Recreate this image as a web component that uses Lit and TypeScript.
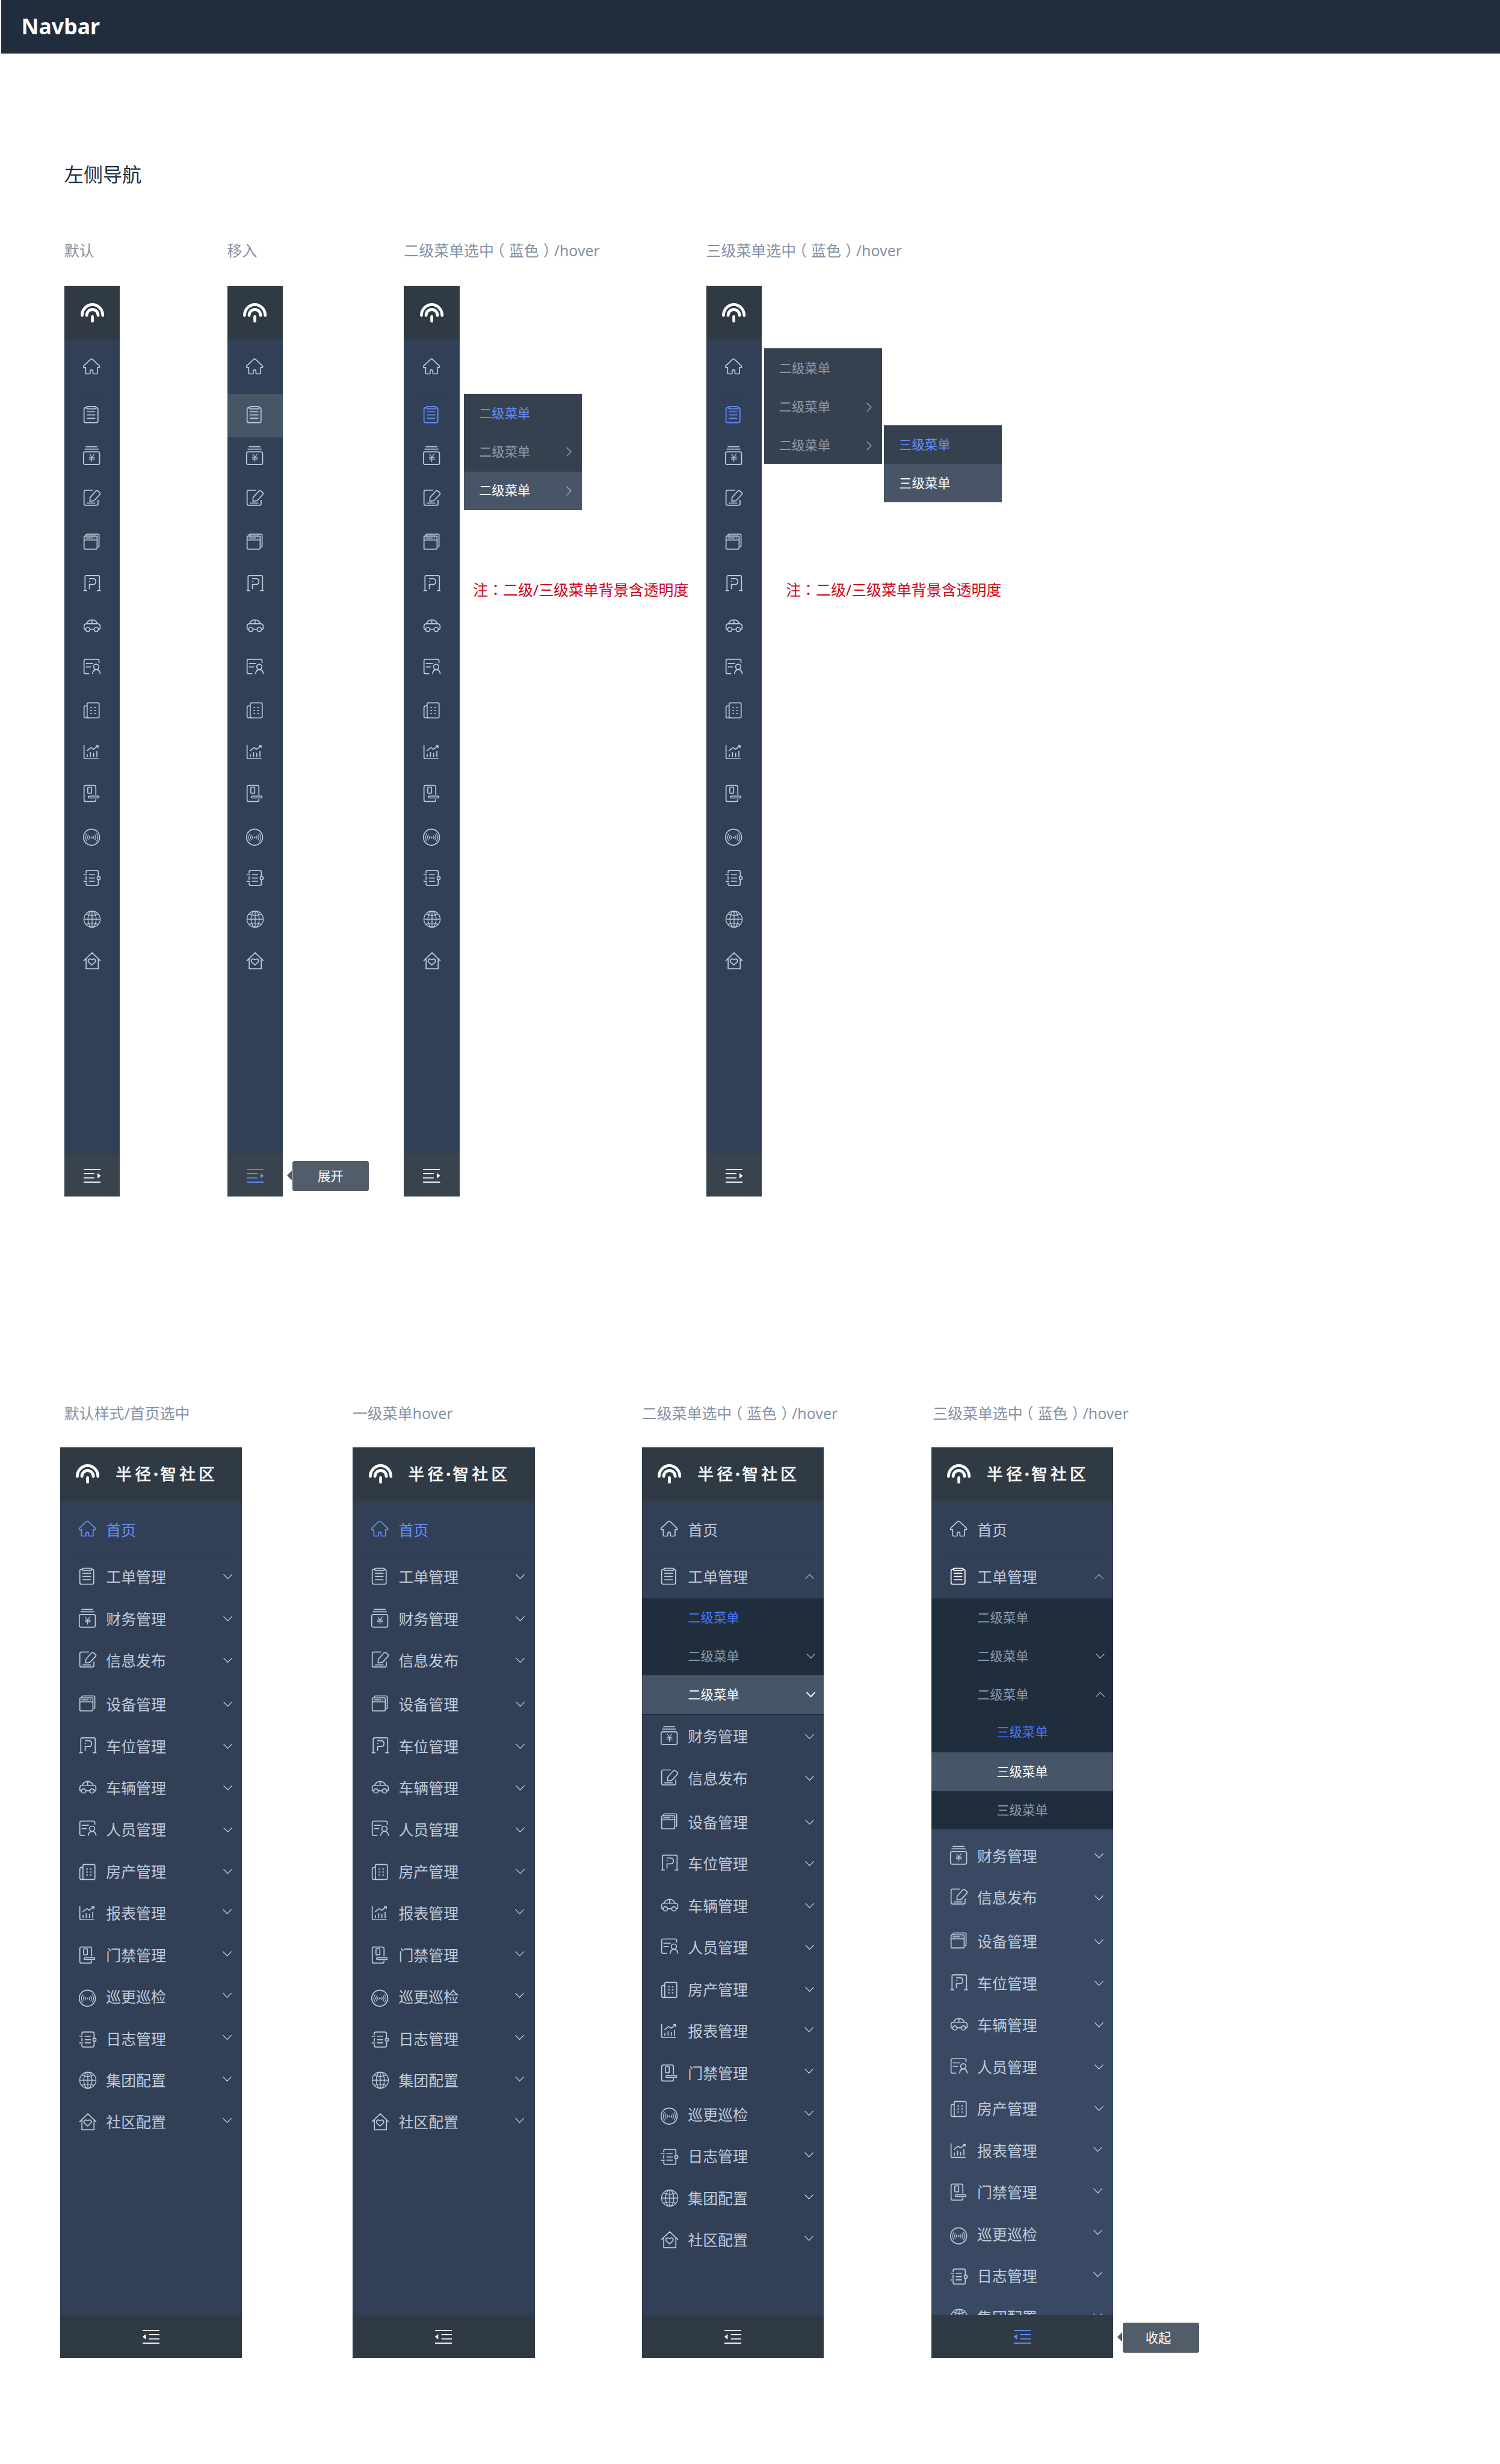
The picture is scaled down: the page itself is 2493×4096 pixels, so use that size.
import { LitElement, html, css, svg, nothing } from "lit";
import { customElement, property } from "lit/decorators.js";
import { classMap } from "lit/directives/class-map.js";

/* Outline icons, drawn on a 36 x 36 grid with the glyph centred on y = 18. */
const ICONS: Record<string, unknown> = {
  home: svg`<path d="M15.5 4.6Q17 3.4 18.5 4.6L31.6 17Q33.2 20 30.5 20H28V30Q28 32 26 32H21Q19.5 32 19.5 30.5V27Q19.5 24.5 17 24.5T14.5 27V30.5Q14.5 32 13 32H8Q6 32 6 30V20H3.5Q.8 20 2.4 17Z"/>`,
  order: svg`<path d="M7.5 5H6Q3 5 3 8V30Q3 33 6 33H26Q29 33 29 30V8Q29 5 26 5H25.5M8 12.7H24M8 18.6H24M8 24.8H24"/><rect x="7.5" y="3" width="18" height="4.2" rx="2"/>`,
  finance: svg`<path d="M6 1.5H28M4 5.9H30"/><rect x="2" y="11" width="30" height="23.6" rx="3"/><path class="thin" d="M13.3 15L17.5 21L22 15M17.5 21V29.6M12.3 21.3H23M12.3 24.4H23"/>`,
  edit: svg`<path d="M20 4H6Q3 4 3 7V29Q3 32 6 32H26Q29.2 32 29.2 29V22M8 28H24M14.3 17.5L25 5.5Q26.8 3.9 28.8 5.5L32.4 8.6Q34 10.2 32.4 12L23.5 21.8Q21.5 24 18 24.2L13.8 24.4Z"/>`,
  device: svg`<path d="M6.7 7V6Q6.7 4 9 4H29Q31 4 31 6V26Q31 28 29 28"/><rect x="3" y="7.6" width="24.4" height="24.4" rx="2"/><path d="M3 15H27.4M6 11.2H19.3M21.8 11.2H23.6"/>`,
  parking: svg`<path d="M2 32H9M4.8 32V6Q4.8 4 7 4H29.6Q31.8 4 31.8 6V32M27 32H34M13 29V20.5H19.5Q25 20.5 25 15T19.5 9.5H12.5M12.2 14.8H14.4"/>`,
  car: svg`<path d="M6 24.5H5Q3 24.5 3 22.5V19Q3 14.2 8 14.2H28Q33 14.2 33 19V22.5Q33 24.5 31 24.5H30M14 24.5H21.7M7.6 14Q10.5 7 17.7 7T28 14M17.7 7V14"/><circle cx="10" cy="24.8" r="4"/><circle cx="25.8" cy="24.8" r="4"/>`,
  person: svg`<path d="M31 11.4V7.5Q31 4.5 28 4.5H6Q3 4.5 3 7.5V28.5Q3 31.5 6 31.5H12.7M6.3 12.4H20M6.3 18.7H16M18.8 32Q19.6 23.8 26 23.8T33.4 32"/><circle cx="25.8" cy="18.7" r="4.9"/>`,
  building: svg`<rect x="8.8" y="4" width="22.4" height="28" rx="2.4"/><path d="M8.8 9.6H6Q3 9.6 3 12.6V29.4Q3 32 5.6 32H12M15 12.4H18M22 12.4H25M15 18H18M22 18H25M15 23.5H18M22 23.5H25"/>`,
  chart: svg`<path d="M3 4.8V28Q3 30.6 5.6 30.6H30M9 27.3V22M15 27.3V18.3M21 27.3V20M27 27.3V15.7M8.3 16L15.7 10Q16.4 9.6 17 10.2L19.6 12.6Q20.3 13.2 21 12.6L29 6.6M24.8 6.2H29.2V10.6"/>`,
  door: svg`<path d="M25 20.5V6Q25 3 22 3H6Q3 3 3 6V30Q3 33 6 33H22Q25 33 25 30V28.4"/><rect x="10" y="6.2" width="7.2" height="11.4" rx="1"/><rect x="11" y="22.8" width="20" height="3.6" rx="1.8"/>`,
  patrol: svg`<circle cx="17" cy="18" r="15"/><circle class="solid" cx="17.3" cy="18.4" r="1.5"/><path class="thin" d="M20.4 15.6q2.4 2.8 0 5.6M23.2 13.4q3.6 5 0 10M26 11q5.4 7.4 0 14.8M14.2 15.6q-2.4 2.8 0 5.6M11.4 13.4q-3.6 5 0 10M8.6 11q-5.4 7.4 0 14.8"/>`,
  log: svg`<path d="M6.8 9.4V7Q6.8 4 9.8 4H26.4Q29.6 4 29.6 7V15.4M29.6 21.4V29Q29.6 32 26.4 32H9.8Q6.8 32 6.8 29V26.8M6.8 15V21.6M2 12H8.6M2 24.4H8.6M12 12H23.4M12 18.2H23.4M12 24.2H23.4"/><circle cx="30.4" cy="18.4" r="2.9"/>`,
  globe: svg`<g class="mid"><circle cx="18" cy="18" r="15.2"/><ellipse cx="18" cy="18" rx="7.6" ry="15.2"/><path d="M18 2.8V33.2M2.8 18H33.2M6.2 8.2Q18 13.6 29.8 8.2M6.2 27.8Q18 22.4 29.8 27.8"/></g>`,
  community: svg`<path d="M2.4 18.2L18 3.2L33.6 18.2M6.9 14.4V33H29.5V14.4M17.6 26L11.8 20.8Q9.8 18 11.6 15.8T17.6 16.2Q21.6 13.6 23.6 15.8T23.4 20.8Z"/>`,
};

@customElement("nav-icon")
export class NavIcon extends LitElement {
  @property() name = "home";
  static styles = css`
    :host { display: block; width: 36px; height: 36px; }
    svg { display: block; width: 36px; height: 36px; overflow: visible; fill: none; stroke: currentColor; stroke-width: 1.9; stroke-linejoin: round; }
    .thin { stroke-width: 1.3; }
    .mid { stroke-width: 1.5; }
    .solid { fill: currentColor; stroke: none; }
  `;
  render() {
    return html`<svg viewBox="0 0 36 36">${ICONS[this.name]}</svg>`;
  }
}

@customElement("brand-mark")
export class BrandMark extends LitElement {
  static styles = css`
    :host { display: block; }
    svg { display: block; width: 44px; height: 36px; fill: none; stroke: #fff; stroke-width: 5.4; stroke-linecap: round; }
  `;
  render() {
    return html`<svg viewBox="0 0 44 36"><path d="M2.7 22.8A19.3 20.1 0 0 1 41.3 22.8M11.3 22.8A10.7 11 0 0 1 32.7 22.8M22 25.2V33.3"/></svg>`;
  }
}

@customElement("fold-icon")
export class FoldIcon extends LitElement {
  @property() dir = "open";
  static styles = css`
    :host { display: block; }
    svg { display: block; width: 32px; height: 26px; fill: currentColor; }
  `;
  render() {
    return this.dir === "open"
      ? html`<svg viewBox="0 0 32 26"><path d="M0 0H32V2H0ZM0 8H20V10H0ZM0 16H20V18H0ZM0 24H32V26H0ZM26 8L32 13L26 18Z"/></svg>`
      : html`<svg viewBox="0 0 32 26"><path d="M0 0H32V2H0ZM12 8H32V10H12ZM12 16H32V18H12ZM0 24H32V26H0ZM6 8L0 13L6 18Z"/></svg>`;
  }
}

@customElement("chevron-icon")
export class ChevronIcon extends LitElement {
  @property() dir = "down";
  @property({ type: Boolean }) bold = false;
  static styles = css`
    :host { display: block; flex: none; }
    svg { display: block; fill: none; stroke: currentColor; stroke-width: 1.3; }
    .bold { stroke-width: 2.2; }
    .wide { width: 17px; height: 11px; }
    .tall { width: 10px; height: 18px; }
  `;
  render() {
    if (this.dir === "right") return html`<svg class="tall" viewBox="0 0 10 18"><path d="M.6 .8L9 9L.6 17.2"/></svg>`;
    const d = this.dir === "down" ? "M.6 1.2L8.5 9.4L16.4 1.2" : "M.6 9.8L8.5 1.6L16.4 9.8";
    return html`<svg class=${classMap({ wide: true, bold: this.bold })} viewBox="0 0 17 11"><path d=${d}/></svg>`;
  }
}

@customElement("tip-bubble")
export class TipBubble extends LitElement {
  @property({ type: Number }) shift = 0;
  static styles = css`
    :host { display: block; }
    .tip { position: relative; box-sizing: border-box; width: 142px; height: 56px; border-radius: 4px; background: #535d69; color: #fff; font-size: 24px; line-height: 56px; text-align: center; }
    .tip.left { padding-right: 10px; }
    .tip::before { content: ""; position: absolute; left: -10px; top: 18px; border: 10px solid transparent; border-left: 0; border-right-color: #535d69; }
  `;
  render() {
    return html`<div class=${classMap({ tip: true, left: this.shift > 0 })}><slot></slot></div>`;
  }
}

interface Entry { icon: string; text: string; dy: number; railDy: number; gap?: boolean; late?: boolean }
const ENTRIES: Entry[] = [
  { icon: "order", text: "工单管理", dy: -1, railDy: -2 },
  { icon: "finance", text: "财务管理", dy: -1, railDy: -3 },
  { icon: "edit", text: "信息发布", dy: -1.5, railDy: -3 },
  { icon: "device", text: "设备管理", dy: -1.5, railDy: -3, gap: true },
  { icon: "parking", text: "车位管理", dy: -2, railDy: -3 },
  { icon: "car", text: "车辆管理", dy: -1, railDy: -2 },
  { icon: "person", text: "人员管理", dy: -2, railDy: -3.5 },
  { icon: "building", text: "房产管理", dy: 1, railDy: 1 },
  { icon: "chart", text: "报表管理", dy: 0, railDy: 0, late: true },
  { icon: "door", text: "门禁管理", dy: 0, railDy: 0, late: true },
  { icon: "patrol", text: "巡更巡检", dy: 3, railDy: 3, late: true },
  { icon: "log", text: "日志管理", dy: 1.5, railDy: 1.5, late: true },
  { icon: "globe", text: "集团配置", dy: 0, railDy: 0, late: true },
  { icon: "community", text: "社区配置", dy: 0, railDy: 0, late: true },
];

@customElement("side-rail")
export class SideRail extends LitElement {
  @property({ type: Boolean }) hover = false;
  @property({ type: Boolean }) selected = false;
  static styles = css`
    :host { display: block; flex: none; }
    .rail { display: flex; flex-direction: column; width: 104px; height: 1700px; background: #313f57; color: #c0ccda; }
    .head { display: flex; justify-content: center; padding-top: 32px; height: 68px; background: #303a44; }
    .home { box-sizing: border-box; height: 100px; padding: 32px 0 0 34px; }
    .line { height: 2px; margin: 0 20px; background: #2d3c5b; }
    .item { box-sizing: border-box; display: flex; align-items: center; height: 78px; padding-left: 34px; }
    .item.first { height: 80px; margin-bottom: -1px; }
    .item.gap { margin-top: 4px; }
    .item.hover { background: #475667; }
    .item.selected { color: #6690ff; }
    .foot { display: flex; justify-content: center; box-sizing: border-box; height: 80px; margin-top: auto; padding-top: 28px; background: #38434d; border-bottom: 1px solid #333e48; color: #fff; }
    .foot.hover { color: #6690ff; }
  `;
  render() {
    return html`<div class="rail">
      <div class="head"><brand-mark></brand-mark></div>
      <div class="home"><nav-icon name="home"></nav-icon></div>
      <div class="line"></div>
      ${ENTRIES.map((e, i) => html`<div class=${classMap({ item: true, first: i === 0, gap: !!e.gap, hover: i === 0 && this.hover, selected: i === 0 && this.selected })}>
        <nav-icon name=${e.icon} style="transform: translateY(${e.railDy}px)"></nav-icon>
      </div>`)}
      <div class=${classMap({ foot: true, hover: this.hover })}><fold-icon dir="open"></fold-icon></div>
    </div>`;
  }
}

interface Sub { text: string; tone?: "blue" | "hover"; arrow?: "down" | "up" | "right"; deep?: boolean }

@customElement("side-panel")
export class SidePanel extends LitElement {
  @property({ type: Boolean }) homeActive = false;
  @property({ type: Boolean }) scrolled = false;
  @property({ attribute: false }) subs: Sub[] = [];
  static styles = css`
    :host { display: block; }
    .panel { display: flex; flex-direction: column; width: 340px; height: 1700px; background: #313f57; color: #c0ccda; font-size: 28px; line-height: 36px; }
    .head { flex: none; display: flex; align-items: center; box-sizing: border-box; height: 100px; padding-left: 30px; background: #303a44; }
    .name { display: flex; margin-left: 30px; color: #fff; font-size: 30px; line-height: 30px; -webkit-text-stroke: 0.8px #fff; }
    .char { width: 36px; }
    .char.tight { width: 31px; }
    .dot { width: 16px; text-align: center; font-family: "Noto Sans", sans-serif; font-weight: 700; }
    .list { flex: 1; min-height: 0; display: flex; flex-direction: column; overflow: hidden; }
    .home, .item, .sub { flex: none; box-sizing: border-box; display: flex; align-items: center; }
    .home { height: 100px; padding: 8px 0 0 34px; }
    .home.active { color: #6690ff; }
    .home nav-icon { position: relative; top: -2px; }
    .line { flex: none; height: 2px; margin: 0 20px; background: #2d3c5b; }
    .item { height: 78px; padding: 0 18px 0 34px; }
    .item.first { height: 80px; }
    .item.gap { margin-top: 4px; }
    .item.late { padding-right: 20px; }
    .text { margin-left: 16px; white-space: nowrap; }
    .arrow { margin-left: auto; color: #d3dbe4; }
    .arrow.dim { color: #a9b5c3; }
    .late .arrow { padding-bottom: 5px; }
    .subs { flex: none; padding-bottom: 2px; background: #202d3c; }
    .scrolled .subs { padding-bottom: 0; }
    .sub { height: 72px; padding: 0 16px 0 86px; font-size: 24px; color: #8e9bab; }
    .sub .arrow { color: #b4bfcb; }
    .sub.deep { padding-left: 122px; }
    .sub.blue { color: #4678ff; }
    .sub.deep.blue { padding-bottom: 4px; }
    .sub.hover { background: #465567; color: #fff; }
    .sub.hover .arrow { color: #fff; }
    .rest { flex: 1 0 auto; display: flex; flex-direction: column; margin-top: -1px; }
    .expanded .rest { margin-top: 1px; }
    .scrolled .rest { margin-top: 0; padding-top: 10px; background: #394963; }
    .bright { color: #fff; }
    .foot { flex: none; box-sizing: border-box; display: flex; justify-content: center; height: 80px; padding-top: 28px; background: #303a44; color: #fff; }
    .scrolled .foot { color: #6690ff; }
  `;
  private item(e: Entry, first = false) {
    const open = first && this.subs.length > 0;
    return html`<div class=${classMap({ item: true, first, gap: !!e.gap, late: !!e.late })}>
      <nav-icon class=${first && this.scrolled ? "bright" : ""} name=${e.icon} style="transform: translateY(${e.dy}px)"></nav-icon>
      <span class="text">${e.text}</span>
      <span class=${classMap({ arrow: true, dim: open })}><chevron-icon dir=${open ? "up" : "down"}></chevron-icon></span>
    </div>`;
  }
  render() {
    return html`<div class=${classMap({ panel: true, expanded: this.subs.length > 0, scrolled: this.scrolled })}>
      <div class="head"><brand-mark></brand-mark>
        <div class="name"><span class="char">半</span><span class="char tight">径</span><span class="dot">·</span><span class="char">智</span><span class="char">社</span><span class="char">区</span></div>
      </div>
      <div class="list">
        <div class=${classMap({ home: true, active: this.homeActive })}><nav-icon name="home"></nav-icon><span class="text">首页</span></div>
        <div class="line"></div>
        ${this.item(ENTRIES[0], true)}
        ${this.subs.length ? html`<div class="subs">${this.subs.map((s) => html`<div class=${classMap({ sub: true, deep: !!s.deep, blue: s.tone === "blue", hover: s.tone === "hover" })}>
          <span>${s.text}</span>${s.arrow ? html`<span class="arrow"><chevron-icon dir=${s.arrow} ?bold=${s.tone === "hover"}></chevron-icon></span>` : nothing}
        </div>`)}</div>` : nothing}
        <div class="rest">${ENTRIES.slice(1).map((e) => this.item(e))}</div>
      </div>
      <div class="foot"><fold-icon dir="close"></fold-icon></div>
    </div>`;
  }
}

@customElement("fly-menu")
export class FlyMenu extends LitElement {
  @property({ attribute: false }) items: Sub[] = [];
  @property({ type: Boolean }) low = false;
  static styles = css`
    :host { display: block; width: 220px; }
    .row { box-sizing: border-box; display: flex; align-items: center; justify-content: space-between; height: 72px; padding: 0 19px 0 28px; background: #35414e; color: #909cac; font-size: 24px; line-height: 32px; }
    .row.low { padding-top: 4px; }
    .row.blue { color: #6690ff; }
    .row.hover { background: #475567; color: #fff; }
    .arrow { color: #a9b5c3; }
  `;
  render() {
    return this.items.map((s) => html`<div class=${classMap({ row: true, low: this.low, blue: s.tone === "blue", hover: s.tone === "hover" })}>
      <span>${s.text}</span>${s.arrow ? html`<chevron-icon class="arrow" dir="right"></chevron-icon>` : nothing}
    </div>`);
  }
}

const L2 = "二级菜单";
const L3 = "三级菜单";

@customElement("app-root")
export class AppRoot extends LitElement {
  static styles = css`
    :host { display: block; overflow: hidden; background: #fff; font-family: "Noto Sans", "Noto Sans CJK SC", sans-serif; }
    .page { zoom: 0.8904; width: 2800px; height: 4600px; }
    .bar { margin-left: 2px; box-sizing: border-box; height: 100px; padding-left: 38px; background: #202d3d; color: #fff; font-size: 40px; font-weight: 700; line-height: 98px; }
    .title { margin: 205px 0 0 120px; font-size: 36px; font-weight: 400; line-height: 40px; color: #202d3d; }
    .section { display: flex; }
    .rails { margin-top: 108px; padding-left: 120px; }
    .panels { margin-top: 390px; padding-left: 112px; }
    .spec { flex: none; }
    .w304 { width: 304px; }
    .w330 { width: 330px; }
    .w540 { width: 540px; }
    .w546 { width: 546px; }
    .w564 { width: 564px; }
    .label { font-size: 28px; line-height: 30px; color: #8492a6; white-space: nowrap; }
    .rails .label { margin-bottom: 51px; }
    .panels .label { margin-bottom: 48px; }
    .in3 { padding-left: 3px; }
    .in8 { padding-left: 8px; }
    .paren { display: inline-block; font-feature-settings: "halt" 0; }
    .paren.l { transform: translateX(-8px); }
    .paren.r { transform: translateX(8px); }
    .body { position: relative; display: flex; }
    .tip { position: absolute; }
    .tip.open { left: 122px; top: 1634px; }
    .tip.close { left: 358px; top: 1634px; }
    .fly { position: absolute; }
    .fly.a { left: 112px; top: 202px; }
    .fly.b { left: 108px; top: 116px; }
    .fly.c { left: 332px; top: 260px; }
    .note { margin: 552px 0 0 25px; font-size: 28px; line-height: 28px; color: #d0021b; white-space: nowrap; }
    .note.far { margin-left: 45px; }
    .mark { font-family: "Noto Sans CJK TC", sans-serif; }
  `;
  private note(far: boolean) {
    return html`<div class=${classMap({ note: true, far })}>注<span class="mark" lang="zh-TW">：</span>二级/三级菜单背景含透明度</div>`;
  }
  private selectedLabel(level: string) {
    return html`${level}级菜单选中<span class="paren l">（</span>蓝色<span class="paren r">）</span>/hover`;
  }
  render() {
    return html`<div class="page">
      <header class="bar">Navbar</header>
      <h1 class="title">左侧导航</h1>
      <section class="section rails">
        <div class="spec w304"><div class="label">默认</div><div class="body"><side-rail></side-rail></div></div>
        <div class="spec w330"><div class="label">移入</div><div class="body"><side-rail hover></side-rail><tip-bubble class="tip open">展开</tip-bubble></div></div>
        <div class="spec w564"><div class="label">${this.selectedLabel("二")}</div><div class="body"><side-rail selected></side-rail>
          <fly-menu class="fly a" .items=${[{ text: L2, tone: "blue" }, { text: L2, arrow: "right" }, { text: L2, arrow: "right", tone: "hover" }]}></fly-menu>
          ${this.note(false)}</div></div>
        <div class="spec"><div class="label">${this.selectedLabel("三")}</div><div class="body"><side-rail selected></side-rail>
          <fly-menu class="fly b" low .items=${[{ text: L2 }, { text: L2, arrow: "right" }, { text: L2, arrow: "right" }]}></fly-menu>
          <fly-menu class="fly c" .items=${[{ text: L3, tone: "blue" }, { text: L3, tone: "hover" }]}></fly-menu>
          ${this.note(true)}</div></div>
      </section>
      <section class="section panels">
        <div class="spec w546"><div class="label in8">默认样式/首页选中</div><side-panel homeActive></side-panel></div>
        <div class="spec w540"><div class="label">一级菜单hover</div><side-panel homeActive></side-panel></div>
        <div class="spec w540"><div class="label">${this.selectedLabel("二")}</div>
          <side-panel .subs=${[{ text: L2, tone: "blue" }, { text: L2, arrow: "down" }, { text: L2, arrow: "down", tone: "hover" }]}></side-panel></div>
        <div class="spec"><div class="label in3">${this.selectedLabel("三")}</div><div class="body">
          <side-panel scrolled .subs=${[{ text: L2 }, { text: L2, arrow: "down" }, { text: L2, arrow: "up" }, { text: L3, deep: true, tone: "blue" }, { text: L3, deep: true, tone: "hover" }, { text: L3, deep: true }]}></side-panel>
          <tip-bubble class="tip close" shift="1">收起</tip-bubble></div></div>
      </section>
    </div>`;
  }
}
